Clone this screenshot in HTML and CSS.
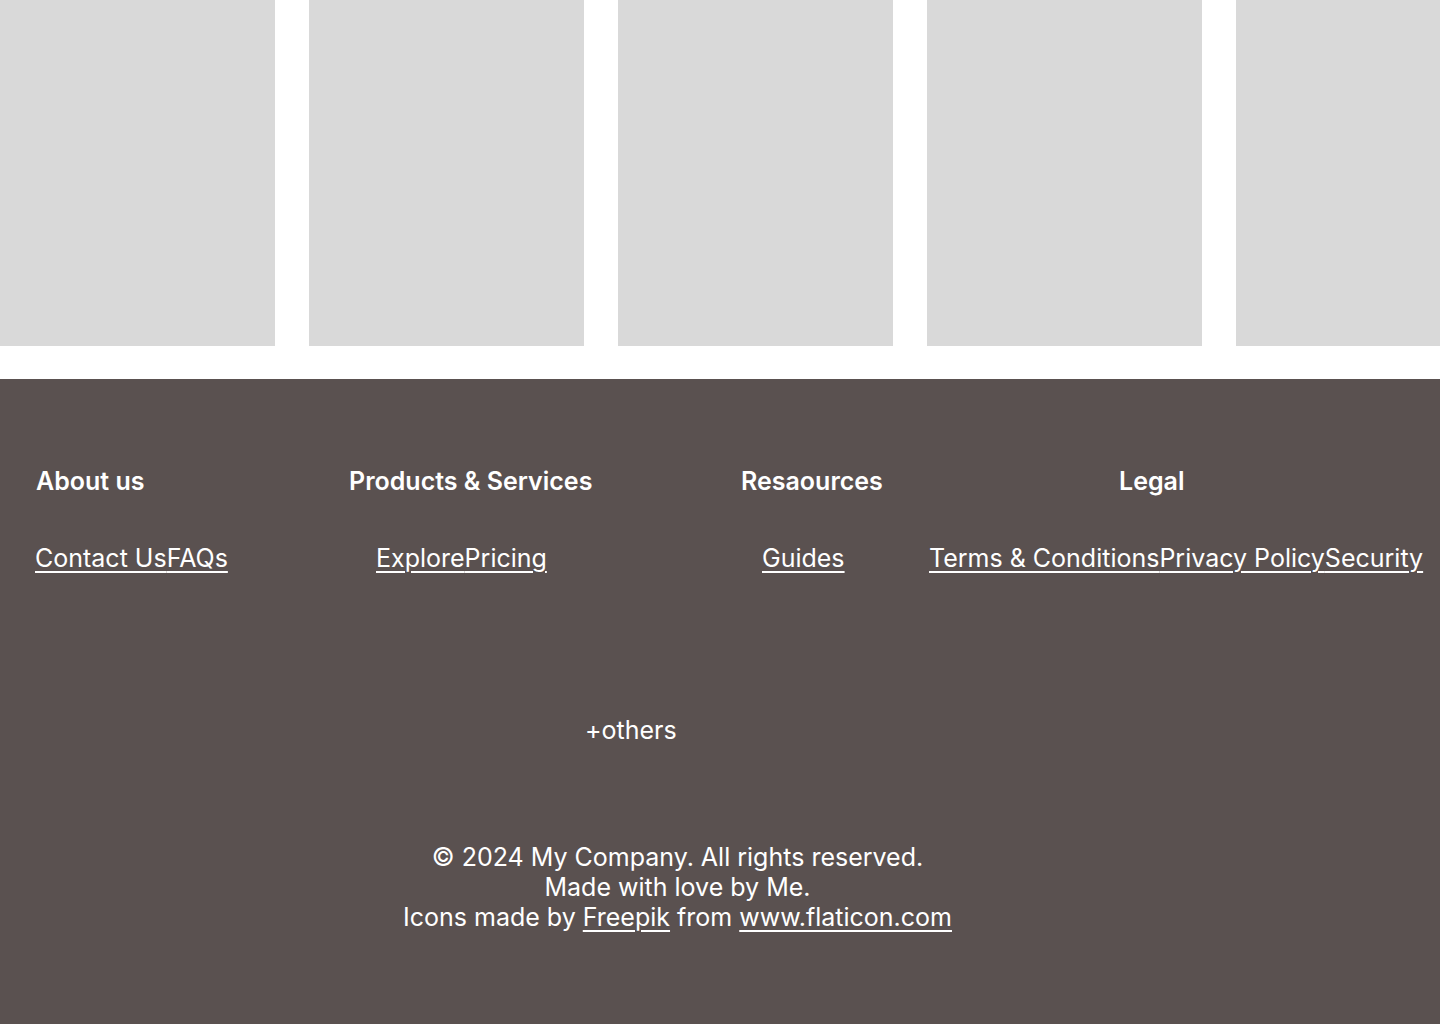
FILE: index.html
```html
<!DOCTYPE html>
<html lang="en">
<head>
<meta charset="utf-8">
<title>My Company</title>
<link rel="stylesheet" href="styles.css">
</head>
<body>
<section class="cards">
  <div class="card"></div>
  <div class="card"></div>
  <div class="card"></div>
  <div class="card"></div>
  <div class="card"></div>
</section>
<footer class="footer">
  <div class="cols">
    <div class="col col-about">
      <h3>About us</h3>
      <ul><li><a href="#">Contact Us</a></li><li><a href="#">FAQs</a></li></ul>
    </div>
    <div class="col col-products">
      <h3>Products &amp; Services</h3>
      <ul><li><a href="#">Explore</a></li><li><a href="#">Pricing</a></li></ul>
    </div>
    <div class="col col-resources">
      <h3>Resaources</h3>
      <ul><li><a href="#">Guides</a></li></ul>
    </div>
    <div class="col col-legal">
      <h3>Legal</h3>
      <ul><li><a href="#">Terms &amp; Conditions</a></li><li><a href="#">Privacy Policy</a></li><li><a href="#">Security</a></li></ul>
    </div>
  </div>
  <p class="others">+others</p>
  <div class="copy">
    <p>© 2024 My Company. All rights reserved.</p>
    <p>Made with love by Me.</p>
    <p>Icons made by <a href="#">Freepik</a> from <a href="#">www.flaticon.com</a></p>
  </div>
</footer>
</body>
</html>
```
FILE: styles.css
```css
* { box-sizing: border-box; }
html, body { margin: 0; padding: 0; }
body {
  font-family: Inter, "Noto Sans", "Liberation Sans", sans-serif;
  background: #ffffff;
  overflow: hidden;
}
.cards {
  display: flex;
  gap: 34px;
  margin-bottom: 33px;
  overflow: hidden;
}
.card {
  flex: 0 0 275px;
  height: 346px;
  background: #d9d9d9;
}
.footer {
  background: #5a5150;
  color: #ffffff;
  min-height: 645px;
  padding-top: 88px;
  padding-bottom: 80px;
}
.footer a {
  color: #ffffff;
  text-decoration: underline;
  text-underline-offset: 4px;
  text-decoration-thickness: 1.5px;
}
.cols {
  display: grid;
  grid-template-columns: 314px 392px 188px 1fr;
  padding-left: 35px;
}
.col h3 {
  margin: 0;
  font-size: 25px;
  font-weight: 600;
  line-height: 29px;
}
.col ul {
  display: flex;
  list-style: none;
  margin: 48px 0 0;
  padding: 0;
  font-size: 25px;
  line-height: 29px;
}
.col-about h3 { padding-left: 1px; }
.col-products ul { padding-left: 27px; }
.col-resources ul { padding-left: 21px; }
.col-legal h3 { padding-left: 190px; }
.others {
  margin: 143px 0 0;
  padding-left: 585px;
  font-size: 25px;
  line-height: 29px;
}
.copy {
  width: 1355px;
  margin-top: 97px;
  text-align: center;
  font-size: 25px;
  line-height: 30px;
}
.copy p { margin: 0; }
```
